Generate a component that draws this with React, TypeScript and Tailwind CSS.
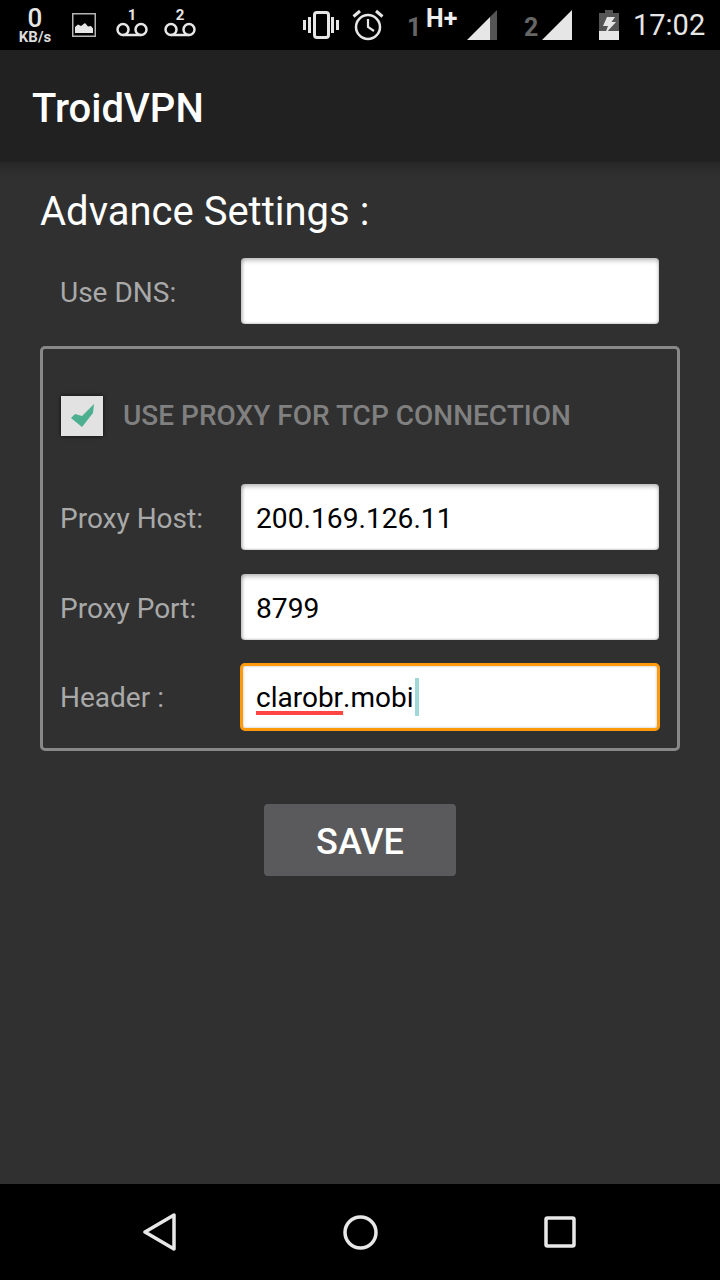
import React from 'react';

const roboto = "font-['Roboto',sans-serif]";

const Field = ({ label, value, focused }: { label: string; value?: string; focused?: boolean }) => (
    <div className={focused ? '-mt-px flex items-center' : 'flex items-center'}>
        <span className={focused ? 'w-[181px] shrink-0 pt-[2px] text-[28px] text-[#a9a9a9]' : 'w-[181px] shrink-0 pt-[4px] text-[28px] text-[#a9a9a9]'}>{label}</span>
        {focused ? (
            <div className="-mx-px flex h-[68px] w-[420px] items-center rounded-[5px] border-[3px] border-[#ff9a0d] bg-white pl-[13px] text-[28px] text-black shadow-[inset_0_0_3px_rgba(0,0,0,0.25)]">
                <span className="pt-[2px] underline decoration-[#ff4444] decoration-[4px] underline-offset-[4px]">clarobr</span>
                <span className="pt-[2px]">.mobi</span>
                <span className="ml-px h-[38px] w-[4px] bg-[#9fd8d6]"></span>
            </div>
        ) : (
            <div className="flex h-[66px] w-[418px] items-center rounded-[4px] bg-white pl-[15px] pt-[4px] text-[28.2px] text-black shadow-[inset_0_3px_4px_rgba(0,0,0,0.22),inset_2px_0_3px_rgba(0,0,0,0.15),inset_-1px_-1px_2px_rgba(0,0,0,0.12)]">
                {value}
            </div>
        )}
    </div>
);

const Voicemail = ({ n }: { n: string }) => (
    <div className="relative h-[50px] w-[34px]">
        <span className="absolute left-0 right-0 top-[6px] text-center text-[15px] font-bold leading-[18px] text-[#e6e6e6]">{n}</span>
        <svg className="absolute left-0 top-[21px]" width="34" height="18" viewBox="0 0 34 18" fill="none" stroke="#e6e6e6" strokeWidth="2.500">
            <circle cx="8" cy="8.500" r="5.500" />
            <circle cx="26" cy="8.500" r="5.500" />
            <path d="M8 14h18" />
        </svg>
    </div>
);

const StatusBar = () => (
    <div className="flex h-[50px] items-center bg-black text-[#e6e6e6]">
        <div className="ml-[18px] flex w-[34px] flex-col items-center">
            <span className="text-[26px] font-medium leading-[24px]">0</span>
            <span className="text-[15px] font-bold leading-[14px] text-[#dcdcdc]">KB/s</span>
        </div>
        <svg className="ml-[20px]" width="24" height="24" viewBox="0 0 24 24">
            <rect x="0.75" y="0.75" width="22.5" height="22.5" fill="none" stroke="#b5b5b5" strokeWidth="1.5" />
            <path d="M3 20v-6l3-2.500 3 1.500 4-3 3 3.500 3-.5 2 2.500V20z" fill="#e6e6e6" />
        </svg>
        <div className="ml-[19px]"><Voicemail n="1" /></div>
        <div className="ml-[14px]"><Voicemail n="2" /></div>
        <svg className="ml-[106px]" width="36" height="28" viewBox="0 0 36 28" fill="none">
            <rect x="11.500" y="1.500" width="14" height="25" rx="2.500" stroke="#e6e6e6" strokeWidth="3" />
            <path d="M1.500 9v10M6.500 6v16M29.500 6v16M34.500 9v10" stroke="#e6e6e6" strokeWidth="3" />
        </svg>
        <svg className="ml-[13px]" width="32" height="32" viewBox="0 0 32 32" fill="none" stroke="#e6e6e6">
            <circle cx="16" cy="18" r="12" strokeWidth="2.500" />
            <path d="M16 10v8l6 4" strokeWidth="2.200" />
            <path d="M1.500 7.500 8 2M30.500 7.500 24 2" strokeWidth="3" />
        </svg>
        <span className="ml-[23px] w-[10px] pt-[5px] text-[25px] font-bold leading-none text-[#666]">1</span>
        <span className="ml-[9px] w-[32px] -translate-y-[7px] text-[25px] font-bold leading-none text-[#eeeeee]">H+</span>
        <svg className="ml-[9px]" width="30" height="30" viewBox="0 0 30 30">
            <path d="M0 30 23 7v23z" fill="#e6e6e6" />
            <path d="M23 7 30 0v30h-7z" fill="#555" />
        </svg>
        <span className="ml-[27px] w-[14px] pt-[5px] text-[25px] font-bold leading-none text-[#666]">2</span>
        <svg className="ml-[4px]" width="30" height="30" viewBox="0 0 30 30">
            <path d="M0 30 30 0v30z" fill="#e6e6e6" />
        </svg>
        <svg className="ml-[27px]" width="20" height="30" viewBox="0 0 20 30">
            <path d="M6 0h8v3h6v27H0V3h6z" fill="#555" />
            <path d="M0 21h20v9H0z" fill="#e6e6e6" />
            <path d="M8 7h8l-3.500 5H17L6 24l3-8H4z" fill="#e6e6e6" />
        </svg>
        <span className="ml-[14px] text-[29px] leading-none text-[#e6e6e6]">17:02</span>
    </div>
);

export default function App() {
    return (
        <div className={`${roboto} flex h-[1280px] w-[720px] flex-col overflow-hidden bg-[#303030]`}>
            <StatusBar />

            {/* action bar */}
            <div className="flex h-[112px] items-center bg-[#212121] pl-[32px] pt-[6px]">
                <h1 className="text-[40px] font-medium text-white">TroidVPN</h1>
            </div>

            <main className="flex-1 bg-[linear-gradient(#272727,#303030_14px)] px-[40px]">
                <h2 className="mt-[26px] h-[48px] text-[40px] leading-[48px] text-white">Advance Settings :</h2>

                <div className="mt-[22px] pl-[20px]">
                    <Field label="Use DNS:" />
                </div>

                <div className="mt-[22px] flex flex-col rounded-[5px] border-[3px] border-[#888888] pb-[17px] pl-[17px] pr-[18px]">
                    <div className="mt-[47px] flex items-center">
                        <div className="ml-px flex h-[40px] w-[42px] items-center justify-center bg-[#e2e2e2] shadow-[0_0_4px_rgba(0,0,0,0.7)]">
                            <svg width="42" height="40" viewBox="0 0 42 40">
                                <path d="M33 8 21 20l-7-2-4 4 11 9 11-14z" fill="#4caf8f" />
                            </svg>
                        </div>
                        <span className="ml-[20px] h-[40px] text-[28px] font-medium uppercase leading-[40px] text-[#808080]">Use proxy for TCP connection</span>
                    </div>
                    <div className="mt-[48px] flex flex-col gap-[24px]">
                        <Field label="Proxy Host:" value="200.169.126.11" />
                        <Field label="Proxy Port:" value="8799" />
                        <Field label="Header :" focused />
                    </div>
                </div>

                <button className="mx-auto mt-[53px] block h-[72px] w-[192px] rounded-[4px] bg-[#5a5a5c] pt-[4px] text-[36px] font-medium text-white">SAVE</button>
            </main>

            {/* nav bar */}
            <div className="flex h-[96px] items-center justify-center bg-black">
                <div className="mr-px flex w-[433px] items-center justify-between">
                    <svg width="33" height="38" viewBox="0 0 33 38" fill="none" stroke="#e8e8e8" strokeWidth="3.500" strokeLinejoin="round">
                        <path d="M31 2v34L2 19z" />
                    </svg>
                    <svg width="35" height="35" viewBox="0 0 35 35" fill="none" stroke="#e8e8e8" strokeWidth="3.500">
                        <circle cx="17.500" cy="17.500" r="15.500" />
                    </svg>
                    <svg width="32" height="32" viewBox="0 0 32 32" fill="none" stroke="#e8e8e8" strokeWidth="3.500">
                        <rect x="2" y="2" width="28" height="28" rx="1.500" />
                    </svg>
                </div>
            </div>
        </div>
    );
}
